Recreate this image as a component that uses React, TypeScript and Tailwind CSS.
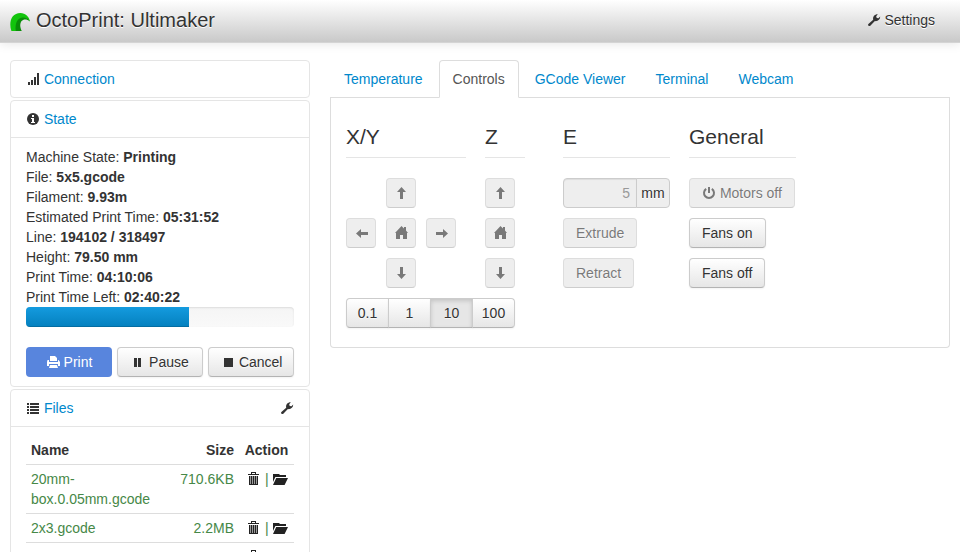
import type { ReactNode } from "react";

const ICON = "inline-block h-[14px] w-[14px] mt-px align-text-top";

function Icon({ children, wide = false }: { children: ReactNode; wide?: boolean }) {
  return (
    <svg
      viewBox={wide ? "0 0 16 14" : "0 0 14 14"}
      className={wide ? "mt-px inline-block h-[14px] w-4 align-text-top" : ICON}
      fill="currentColor"
      aria-hidden="true"
    >
      {children}
    </svg>
  );
}

const SignalIcon = () => (
  <Icon>
    <path d="M2 10h2v3H2zM5 8h2v5H5zM8 5h2v8H8zM11 1h2v12h-2z" />
  </Icon>
);

const InfoIcon = () => (
  <Icon>
    <circle cx="7" cy="7" r="6" />
    <path fill="#fff" d="M6 3h2v2H6zM5 6h3v4h1v1H5v-1h1V7H5z" />
  </Icon>
);

const ListIcon = () => (
  <Icon>
    <path d="M1 2h2v2H1zM1 5h2v2H1zM1 8h2v2H1zM1 11h2v2H1zM4 2h9v2H4zM4 5h9v2H4zM4 8h9v2H4zM4 11h9v2H4z" />
  </Icon>
);

const WrenchIcon = () => (
  <Icon>
    <path d="M1.4 11 6.2 6.8C5.6 3.6 7.4 1.2 10.8 1.2L9.2 3.2l.5 1.7 1.8.3L13.2 3.6C13.2 6.8 11 8.4 7.9 8.1L3.3 12.7C2.1 13.8.2 12.2 1.4 11z" />
  </Icon>
);

const PrintIcon = () => (
  <Icon>
    <path d="M4 1h5l2 2v3H4zM1.5 5H3v2h9V5h.5L14 7v4h-2V9H3v2H1V7zM4 10h7l1 3H3z" />
  </Icon>
);

const PauseIcon = () => (
  <Icon>
    <path d="M3 3h3v9H3zM7 3h3v9H7z" />
  </Icon>
);

const StopIcon = () => (
  <Icon>
    <path d="M3 3h9v9H3z" />
  </Icon>
);

const TrashIcon = () => (
  <Icon>
    <path d="M4 0h5v2h3v1H1V2h3zM5 1v1h3V1zM2 4h9v9H2z" />
    <path fill="#999" d="M3 4h1v8H3zM5 4h1v8H5zM7 4h1v8H7zM9 4h1v8H9z" />
  </Icon>
);

const FolderIcon = () => (
  <Icon wide>
    <path d="M1 2h6l1 1h6v2H3.4L1 10zM4.2 6H16L12.6 13H1z" />
  </Icon>
);

const ARROWS = {
  up: "M7.5 1 12 6H9v7H6V6H3z",
  down: "M7.5 13 3 8h3V1h3v7h3z",
  left: "M2 7.5 7 3v3h7v3H7v3z",
  right: "M14 7.5 9 12V9H2V6h7V3z",
};

const ArrowIcon = ({ dir }: { dir: keyof typeof ARROWS }) => (
  <Icon>
    <path d={ARROWS[dir]} />
  </Icon>
);

const HomeIcon = () => (
  <Icon>
    <path d="M7.5 0 10 2.5V1h2v3.5L14 7h-1v6H9V9H6v4H2V7H1z" />
  </Icon>
);

const PowerIcon = () => (
  <Icon>
    <path d="M4.2 2.8a5 5 0 1 0 5.6 0M7 1v6" fill="none" stroke="currentColor" strokeWidth="2" />
  </Icon>
);

const Logo = () => (
  <svg viewBox="0 0 20 18" className="mt-[3px] h-[18px] w-5 shrink-0" aria-hidden="true">
    <path fill="#12c40c" d="M1.4 18C-1.6 9 1.6 0 10.4 0 15.6 0 19 3.6 20 8.4 17 5.4 13.6 4.4 11 6.4L6.4 18z" />
    <path fill="#0a8d08" d="M5.8 18C4.8 10.6 7.4 5 12.4 4.6 16 4.4 18.6 6 20 8.4 16.6 5.8 13.4 6 11.6 8 9.6 10.6 10 14.6 11.8 18z" />
  </svg>
);

const BTN =
  "h-[30px] border border-[#ccc] border-b-[#b3b3b3] whitespace-nowrap text-shadow-[0_1px_1px_rgba(255,255,255,0.75)]";
const BTN_UP =
  "bg-linear-to-b from-white to-[#e6e6e6] shadow-[inset_0_1px_0_rgba(255,255,255,0.2),0_1px_2px_rgba(0,0,0,0.05)]";
const BTN_OFF = "bg-[#e6e6e6] opacity-65";

function Button({
  children,
  disabled = false,
  square = false,
  className = "",
  label,
}: {
  children: ReactNode;
  disabled?: boolean;
  square?: boolean;
  className?: string;
  label?: string;
}) {
  return (
    <button
      type="button"
      disabled={disabled}
      aria-label={label}
      className={`${BTN} rounded ${disabled ? BTN_OFF : BTN_UP} ${square ? "w-[30px]" : "px-3"} ${className}`}
    >
      {children}
    </button>
  );
}

function Panel({
  icon,
  title,
  action,
  children,
}: {
  icon: ReactNode;
  title: string;
  action?: ReactNode;
  children?: ReactNode;
}) {
  return (
    <section className="rounded border border-[#e5e5e5]">
      <h2 className="flex justify-between px-[15px] py-2">
        <span>
          {icon}{" "}
          <a href="#" className="text-[#08c]">
            {title}
          </a>
        </span>
        {action}
      </h2>
      {children && <div className="border-t border-[#e5e5e5] px-[15px] py-[9px]">{children}</div>}
    </section>
  );
}

const STATE = [
  ["Machine State", "Printing"],
  ["File", "5x5.gcode"],
  ["Filament", "9.93m"],
  ["Estimated Print Time", "05:31:52"],
  ["Line", "194102 / 318497"],
  ["Height", "79.50 mm"],
  ["Print Time", "04:10:06"],
  ["Print Time Left", "02:40:22"],
];

const FILES = [
  ["20mm-box.0.05mm.gcode", "710.6KB"],
  ["2x3.gcode", "2.2MB"],
];

const TABS = ["Temperature", "Controls", "GCode Viewer", "Terminal", "Webcam"];
const STEPS = ["0.1", "1", "10", "100"];
const PROGRESS = 61;

const Legend = ({ children }: { children: ReactNode }) => (
  <h3 className="mb-5 border-b border-[#e5e5e5] text-[21px] leading-10">{children}</h3>
);

function Sidebar() {
  return (
    <aside className="flex w-[300px] shrink-0 flex-col gap-[2px]">
      <Panel icon={<SignalIcon />} title="Connection" />
      <Panel icon={<InfoIcon />} title="State">
        {STATE.map(([name, value]) => (
          <p key={name}>
            {name}: <strong>{value}</strong>
          </p>
        ))}
        <div
          role="progressbar"
          aria-valuenow={PROGRESS}
          className="mb-5 h-5 overflow-hidden rounded bg-linear-to-b from-[#f5f5f5] to-[#f9f9f9] shadow-[inset_0_1px_2px_rgba(0,0,0,0.1)]"
        >
          <div
            className="h-full bg-linear-to-b from-[#149bdf] to-[#0480be] shadow-[inset_0_-1px_0_rgba(0,0,0,0.15)]"
            style={{ width: `${PROGRESS}%` }}
          />
        </div>
        <div className="grid grid-cols-3 gap-[5px]">
          <button type="button" disabled className="h-[30px] rounded bg-[#04c] text-white opacity-65">
            <PrintIcon /> Print
          </button>
          <Button>
            <PauseIcon /> Pause
          </Button>
          <Button>
            <StopIcon /> Cancel
          </Button>
        </div>
      </Panel>
      <Panel
        icon={<ListIcon />}
        title="Files"
        action={
          <a href="#" aria-label="File list settings">
            <WrenchIcon />
          </a>
        }
      >
        <table className="w-full table-fixed">
          <thead>
            <tr>
              <th className="px-[5px] py-1 text-left">Name</th>
              <th className="w-20 px-[5px] py-1 text-right">Size</th>
              <th className="w-[55px] px-[5px] py-1 text-center">Action</th>
            </tr>
          </thead>
          <tbody>
            {FILES.map(([name, size]) => (
              <tr key={name} className="border-t border-[#ddd] align-top text-[#468847]">
                <td className="px-[5px] py-1">{name}</td>
                <td className="px-[5px] py-1 text-right">{size}</td>
                <td className="py-1 pl-2 whitespace-nowrap">
                  <a href="#" aria-label={`Delete ${name}`} className="text-[#222]">
                    <TrashIcon />
                  </a>{" "}
                  |{" "}
                  <a href="#" aria-label={`Load ${name}`} className="text-[#222]">
                    <FolderIcon />
                  </a>
                </td>
              </tr>
            ))}
            <tr className="border-t border-[#ddd] align-top text-[#222]">
              <td colSpan={2} />
              <td className="py-1 pl-2">
                <a href="#" aria-label="Delete">
                  <TrashIcon />
                </a>
              </td>
            </tr>
          </tbody>
        </table>
      </Panel>
    </aside>
  );
}

function Controls() {
  return (
    <div className="flex flex-wrap gap-[19px] rounded-b border border-t-0 border-[#ddd] px-[15px] py-[19px]">
      <div className="w-[198px]">
        <div className="flex gap-[19px]">
          <div className="w-[120px]">
            <Legend>X/Y</Legend>
            <div className="grid w-fit grid-cols-3 gap-[10px]">
              <Button square disabled label="Y up" className="col-start-2">
                <ArrowIcon dir="up" />
              </Button>
              <Button square disabled label="X left" className="col-start-1">
                <ArrowIcon dir="left" />
              </Button>
              <Button square disabled label="Home X/Y">
                <HomeIcon />
              </Button>
              <Button square disabled label="X right">
                <ArrowIcon dir="right" />
              </Button>
              <Button square disabled label="Y down" className="col-start-2">
                <ArrowIcon dir="down" />
              </Button>
            </div>
          </div>
          <div className="w-10">
            <Legend>Z</Legend>
            <div className="flex flex-col gap-[10px]">
              <Button square disabled label="Z up">
                <ArrowIcon dir="up" />
              </Button>
              <Button square disabled label="Home Z">
                <HomeIcon />
              </Button>
              <Button square disabled label="Z down">
                <ArrowIcon dir="down" />
              </Button>
            </div>
          </div>
        </div>
        <div className="mt-[10px] flex -space-x-px">
          {STEPS.map((step) => (
            <button
              key={step}
              type="button"
              aria-pressed={step === "10"}
              className={`${BTN} w-[43px] first:rounded-l last:rounded-r ${
                step === "10"
                  ? "bg-[#e6e6e6] shadow-[inset_0_2px_4px_rgba(0,0,0,0.15),0_1px_2px_rgba(0,0,0,0.05)]"
                  : BTN_UP
              }`}
            >
              {step}
            </button>
          ))}
        </div>
      </div>
      <div className="w-[107px]">
        <Legend>E</Legend>
        <div className="flex flex-col items-start gap-[10px]">
          <div className="flex w-full">
            <input
              id="extrusion"
              type="text"
              defaultValue="5"
              disabled
              className="h-[30px] w-[74px] rounded-l border border-[#ccc] bg-[#eee] px-[6px] text-right text-[#999] shadow-[inset_0_1px_1px_rgba(0,0,0,0.075)]"
            />
            <label
              htmlFor="extrusion"
              className="-ml-px h-[30px] flex-1 rounded-r border border-[#ccc] bg-[#eee] py-1 text-center text-shadow-[0_1px_0_#fff]"
            >
              mm
            </label>
          </div>
          <Button disabled>Extrude</Button>
          <Button disabled>Retract</Button>
        </div>
      </div>
      <div className="w-[107px]">
        <Legend>General</Legend>
        <div className="flex flex-col items-start gap-[10px]">
          <Button disabled>
            <PowerIcon /> Motors off
          </Button>
          <Button>Fans on</Button>
          <Button>Fans off</Button>
        </div>
      </div>
    </div>
  );
}

export default function App() {
  return (
    <div className="h-screen overflow-hidden bg-white font-['Liberation_Sans',Arial,sans-serif] text-sm leading-5 text-[#333]">
      <header className="flex items-center justify-between border-b border-[#d4d4d4] bg-linear-to-b from-white to-[#c9c9c9] px-[10px] pt-[10px] pb-3 shadow-[0_1px_10px_rgba(0,0,0,0.1)] text-shadow-[0_1px_0_#fff]">
        <a href="#" className="flex h-5 items-start gap-[6px] text-xl leading-5">
          <Logo />
          OctoPrint: Ultimaker
        </a>
        <a href="#" className="px-[15px]">
          <WrenchIcon /> Settings
        </a>
      </header>
      <div className="flex gap-5 px-[10px] pt-[17px]">
        <Sidebar />
        <main className="min-w-0 flex-1">
          <nav className="flex gap-[2px] border-b border-[#ddd]">
            {TABS.map((tab) => (
              <a
                key={tab}
                href="#"
                className={`-mb-px rounded-t border px-[13px] py-2 ${
                  tab === "Controls" ? "border-[#ddd] border-b-white bg-white text-[#555]" : "border-transparent text-[#08c]"
                }`}
              >
                {tab}
              </a>
            ))}
          </nav>
          <Controls />
        </main>
      </div>
    </div>
  );
}
